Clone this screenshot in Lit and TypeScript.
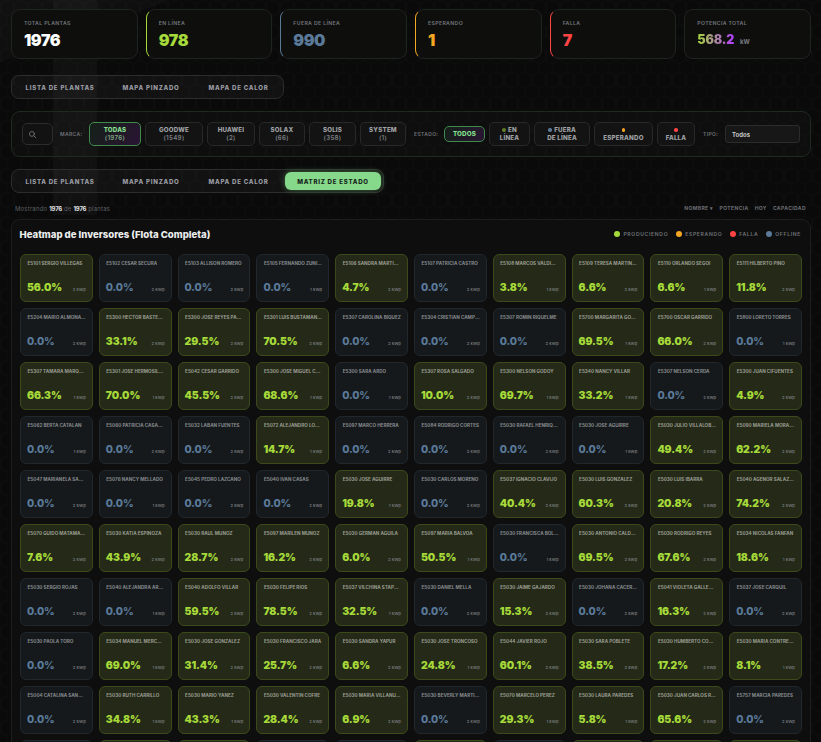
import { LitElement, html, css } from "lit";
import { customElement } from "lit/decorators.js";

const rows = `E5101|SERGIO VILLEGAS|56.0|2;E5102|CESAR SECURA|0|2;E5103|ALLISON ROMERO|0|2;E5105|FERNANDO ZUÑIGA|0|1;E5106|SANDRA MARTINEZ|4.7|2;E5107|PATRICIA CASTRO|0|2;E5108|MARCOS VALDIVIA|3.8|1;E5109|TERESA MARTINEZ|6.6|2;E5110|ORLANDO SEGOI|6.6|1;E5111|HILBERTO PINO|11.8|2
E5204|MARIO ALMONACID|0|2;E5300|HECTOR BASTERRICA|33.1|2;E5300|JOSE REYES PAREDES|29.5|2;E5301|LUIS BUSTAMANTE|70.5|2;E5307|CAROLINA BIQUEZ|0|2;E5304|CRISTIAN CAMPOS|0|2;E5307|ROMIN RIQUELME|0|2;E5700|MARGARITA GODOY|69.5|1;E5700|OSCAR GARRIDO|66.0|2;E5800|LORETO TORRES|0|1
E5307|TAMARA MARQUEZ|66.3|1;E5301|JOSE HERMOSILLA|70.0|1;E5042|CESAR GARRIDO|45.5|2;E5300|JOSE MIGUEL CORTES|68.6|1;E5300|SARA ARDO|0|1;E5307|ROSA SALGADO|10.0|2;E5300|NELSON GODOY|69.7|1;E5340|NANCY VILLAR|33.2|1;E5307|NELSON CERDA|0|2;E5300|JUAN CIFUENTES|4.9|2
E5062|BERTA CATALAN|0|1;E5060|PATRICIA CASANOVA|0|2;E5032|LABAN FUENTES|0|2;E5072|ALEJANDRO LOPEZ|14.7|1;E5097|MARCO HERRERA|0|2;E5084|RODRIGO CORTES|0|2;E5030|RAFAEL HENRIQUEZ|0|2;E5030|JOSE AGUIRRE|0|1;E5030|JULIO VILLALOBOS|49.4|2;E5090|MARIELA MORALES|62.2|2
E5047|MARIANELA SALAS|0|2;E5076|NANCY MELLADO|0|1;E5045|PEDRO LAZCANO|0|2;E5040|IVAN CASAS|0|2;E5030|JOSE AGUIRRE|19.8|1;E5030|CARLOS MORENO|0|2;E5037|IGNACIO CLAVIJO|40.4|2;E5030|LUIS GONZALEZ|60.3|2;E5030|LUIS IBARRA|20.8|2;E5040|AGENOR SALAZAR|74.2|2
E5070|GUIDO MATAMALA|7.6|2;E5030|KATIA ESPINOZA|43.9|2;E5030|RAUL MUÑOZ|28.7|2;E5097|MARILEN MUÑOZ|16.2|2;E5030|GERMAN AGUILA|6.0|2;E5097|MARIA BALVOA|50.5|1;E5030|FRANCISCA BOLAÑOS|0|1;E5030|ANTONIO CALDERON|69.5|2;E5030|RODRIGO REYES|67.6|2;E5034|NICOLAS FANFAN|18.6|1
E5030|SERGIO ROJAS|0|2;E5040|ALEJANDRA ARAYA|0|1;E5040|ADOLFO VILLAR|59.5|2;E5030|FELIPE RIOS|78.5|2;E5037|VILCHINA STAPUNG|32.5|1;E5030|DANIEL MELLA|0|2;E5030|JAIME GAJARDO|15.3|2;E5030|JOHANA CACERES|0|2;E5041|VIOLETA GALLEGOS|16.3|2;E5037|JOSE CARQUIL|0|2
E5030|PAOLA TORO|0|2;E5034|MANUEL MERCADO|69.0|1;E5030|JOSE GONZALEZ|31.4|2;E5030|FRANCISCO JARA|25.7|2;E5030|SANDRA YAPUR|6.6|2;E5030|JOSE TRONCOSO|24.8|1;E5044|JAVIER ROJO|60.1|2;E5030|SARA POBLETE|38.5|2;E5030|HUMBERTO CORTES|17.2|2;E5030|MARIA CONTRERAS|8.1|1
E5004|CATALINA SANCHEZ|0|2;E5030|RUTH CARRILLO|34.8|1;E5030|MARIO YANEZ|43.3|1;E5030|VALENTIN COFRE|28.4|2;E5030|MARIA VILLANUEVA|6.9|2;E5030|BEVERLY MARTINEZ|0|2;E5070|MARCELO PEREZ|29.3|1;E5030|LAURA PAREDES|5.8|1;E5030|JUAN CARLOS ROJAS|65.6|2;E5757|MARCIA PAREDES|0|2
E5020|ANA TORRES|0|2;E5021|LUIS SOTO|12.4|2;E5022|ELENA DIAZ|40.1|1;E5023|PEDRO ROJAS|0|2;E5024|JUAN VEGA|0|2;E5025|RITA LEON|22.0|2;E5026|OMAR PAZ|0|1;E5027|INES LARA|31.2|2;E5028|HUGO MENA|18.3|2;E5029|SARA RUIZ|9.4|2`
  .split("\n")
  .map((r) => r.split(";").map((c) => {
    const [id, name, v, k] = c.split("|");
    return { id, name, v, k };
  }));

const kpis = [
  { l: "TOTAL PLANTAS", v: "1976", c: "" },
  { l: "EN LÍNEA", v: "978", c: "lime" },
  { l: "FUERA DE LÍNEA", v: "990", c: "blue" },
  { l: "ESPERANDO", v: "1", c: "amber" },
  { l: "FALLA", v: "7", c: "red" },
];

const brands = [["TODAS", "(1976)"], ["GOODWE", "(1549)"], ["HUAWEI", "(2)"], ["SOLAX", "(66)"], ["SOLIS", "(358)"], ["SYSTEM", "(1)"]];
const states = [
  { a: "EN", b: "LÍNEA", d: "#5e7a24" },
  { a: "FUERA", b: "DE LÍNEA", d: "#5b7a99" },
  { a: "", b: "ESPERANDO", d: "#f5a623" },
  { a: "", b: "FALLA", d: "#ff4444" },
];
const legend = [["PRODUCIENDO", "#a6d93a"], ["ESPERANDO", "#f5a623"], ["FALLA", "#ff4444"], ["OFFLINE", "#5b7a99"]];

const hex = "url(\"data:image/svg+xml,%3Csvg xmlns='http://www.w3.org/2000/svg' width='14' height='24'%3E%3Cpath d='M7 0L14 4V12L7 16L0 12V4ZM7 16V24M0 12V4M14 12V4' fill='none' stroke='%23ffffff' stroke-opacity='.016' stroke-width='1'/%3E%3C/svg%3E\")";

@customElement("app-root")
export class AppRoot extends LitElement {
  static styles = css`
    :host {
      display: block;
      height: 742px;
      overflow: hidden;
      box-sizing: border-box;
      padding: 9px 10px 0 11px;
      color: #fff;
      font-family: "Inter", "Liberation Sans", sans-serif;
      background-color: #0a0a0a;
      background-repeat: no-repeat, no-repeat, repeat;
      background-size: 100% 215px, 100% 215px, 14px 24px;
    }
    .kpis { display: grid; grid-template-columns: repeat(6, 1fr); gap: 8px; }
    .kpi {
      height: 50px; box-sizing: border-box; padding: 10px 12px;
      background: #0e0f0d; border: 1px solid #1e2420; border-radius: 9px;
    }
    .kpi.lime { border-left-color: #a6d93a; }
    .kpi.blue { border-left-color: #5b7a99; }
    .kpi.amber { border-left-color: #f5a623; }
    .kpi.red { border-left-color: #ff4444; }
    .kpi .l { font-size: 5.2px; line-height: 7px; font-weight: 600; letter-spacing: .35px; color: #73767c; }
    .kpi .v { font-size: 16px; line-height: 20px; margin-top: 3px; font-weight: 900; letter-spacing: -.4px; display: flex; align-items: baseline; gap: 6px; }
    .kpi.lime .v { color: #a6d93a; }
    .kpi.blue .v { color: #5b7a99; }
    .kpi.amber .v { color: #f5a623; }
    .kpi.red .v { color: #ff4444; }
    .grad { font-size: 12.5px; letter-spacing: -.2px; background: linear-gradient(90deg, #a6d93a, #b23cff); -webkit-background-clip: text; background-clip: text; color: transparent; }
    .kw { font-size: 6px; font-weight: 700; letter-spacing: 0; color: #7a7d83; }

    .tabs {
      display: inline-grid; grid-auto-flow: column; grid-auto-columns: auto; gap: 4px; box-sizing: border-box; height: 24px; padding: 2px;
      background: rgba(255,255,255,.035); border: 1px solid #2a2d2a; border-radius: 8px; vertical-align: top;
    }
    .tabrow { margin-top: 16px; height: 24px; }
    .tabrow.second { margin-top: 12px; }
    .tab {
      display: flex; align-items: center; justify-content: center; font-size: 6.1px; font-weight: 800;
      letter-spacing: .74px; color: #9a9ca3; border-radius: 6px; white-space: nowrap;
    }
    .t1 { width: 92px; }
    .t2 { width: 82px; }
    .t3 { width: 85px; }
    .tab.on { width: 96px; background: #86d98a; color: #14241a; box-shadow: 0 0 6px rgba(134,217,138,.45); }

    .filters {
      margin-top: 12px; height: 46px; box-sizing: border-box; padding: 0 10px;
      background: rgba(255,255,255,.018); border: 1px solid #1d2a1f; border-radius: 9px;
      display: grid; align-items: center;
      grid-template-columns: 31px 28px 52px 58px 48px 46px 47px 46px 30px 41px 41px 56px 59px 38px 22px 75px;
      column-gap: 4px;
    }
    .search {
      height: 22px; box-sizing: border-box; border: 1px solid #2a2d2a; border-radius: 5px;
      background: #111211; display: flex; align-items: center; padding-left: 5px;
    }
    .flabel { font-size: 5px; font-weight: 600; letter-spacing: .35px; color: #6f7278; white-space: nowrap; margin-left: 3px; }
    .flabel.wide { margin-left: 4px; }
    .fb {
      height: 24px; box-sizing: border-box; border: 1px solid #262926; border-radius: 5px; background: #121312;
      display: flex; flex-direction: column; align-items: center; justify-content: center;
      font-size: 6.2px; line-height: 8px; font-weight: 800; color: #a0a2a6; letter-spacing: .2px; white-space: nowrap;
    }
    .fb .sub { font-weight: 600; color: #7c7f84; letter-spacing: .3px; }
    .fb.on { border-color: #3f8a4c; color: #86e08e; background: linear-gradient(120deg, #142018, #2a1433); }
    .fb.on .sub { color: #7da582; }
    .fb.short { height: 16px; }
    .dotline { display: flex; align-items: center; gap: 2.5px; min-height: 8px; }
    .dot { width: 3.6px; height: 3.6px; border-radius: 50%; flex: none; }
    .select {
      height: 18px; box-sizing: border-box; border: 1px solid #2b2d2b; border-radius: 3px; background: #161716;
      display: flex; align-items: center; padding-left: 6px; font-size: 6px; font-weight: 700; color: #c6c7c9;
    }

    .meta { display: flex; justify-content: space-between; align-items: center; height: 8px; margin-top: 11px; padding: 0 5px 0 4px; }
    .count { font-size: 5.9px; color: #5d6066; letter-spacing: .25px; }
    .count b { color: #d5d6d8; font-weight: 800; letter-spacing: -.2px; }
    .sort { display: flex; gap: 6px; font-size: 5px; font-weight: 700; letter-spacing: .4px; color: #6b6e74; }

    .panel {
      margin-top: 7px; box-sizing: border-box; padding: 8px 8px 0 8px;
      background: #0d0e0d; border: 1px solid #1b1e1c; border-radius: 9px 9px 0 0; height: 560px; overflow: hidden;
    }
    .phead { display: flex; justify-content: space-between; align-items: center; height: 12px; margin-bottom: 14px; }
    .title { font-size: 9.6px; font-weight: 800; color: #eceded; margin-left: -.5px; }
    .legend { display: flex; gap: 8px; padding-right: 1px; }
    .li { display: flex; align-items: center; gap: 3px; font-size: 5.1px; font-weight: 600; letter-spacing: .65px; color: #6f7278; }
    .li i { width: 6px; height: 6px; border-radius: 50%; display: block; }

    .grid { display: grid; grid-template-columns: repeat(10, 1fr); gap: 6px; }
    .cell {
      height: 48px; box-sizing: border-box; padding: 6px 6px 0 6px; border-radius: 6px;
      border: 1px solid #20272d; background: #15191c; min-width: 0; display: flex; flex-direction: column;
    }
    .cell.on { border-color: #3c4a1b; background: #242a17; }
    .name {
      font-size: 4.6px; line-height: 6px; font-weight: 700; color: #868a8c; white-space: nowrap; overflow: hidden;
      text-overflow: ellipsis; padding-left: .5px; letter-spacing: .02px;
    }
    .on .name { color: #9a9c92; }
    .row { display: flex; justify-content: space-between; align-items: baseline; margin-top: 14px; }
    .val { font-size: 10.4px; line-height: 14px; font-weight: 800; color: #5b7a99; letter-spacing: -.1px; }
    .on .val { color: #a6d93a; font-weight: 900; }
    .kwp { font-size: 4.1px; font-weight: 600; color: #75787a; letter-spacing: .1px; }
  `;

  connectedCallback() {
    super.connectedCallback();
    this.style.backgroundImage = [
      "linear-gradient(90deg, transparent 53px, rgba(255,255,255,.028) 53px, rgba(255,255,255,.028) 97px, transparent 97px)",
      "linear-gradient(160deg, rgba(255,255,255,.03) 0, rgba(255,255,255,.02) 12%, transparent 12.2%)",
      hex,
    ].join(",");
  }

  private tabs(all: boolean) {
    return html`<div class="tabs">
      <div class="tab t1">LISTA DE PLANTAS</div>
      <div class="tab t2">MAPA PINZADO</div>
      <div class="tab t3">MAPA DE CALOR</div>
      ${all ? html`<div class="tab on">MATRIZ DE ESTADO</div>` : ""}
    </div>`;
  }

  render() {
    return html`
      <div class="kpis">
        ${kpis.map((k) => html`<div class="kpi ${k.c}"><div class="l">${k.l}</div><div class="v">${k.v}</div></div>`)}
        <div class="kpi"><div class="l">POTENCIA TOTAL</div><div class="v"><span class="grad">568.2</span><span class="kw">kW</span></div></div>
      </div>
      <div class="tabrow">${this.tabs(false)}</div>
      <div class="filters">
        <div class="search">
          <svg width="9" height="9" viewBox="0 0 24 24" fill="none" stroke="#6f7278" stroke-width="2.4" stroke-linecap="round"><circle cx="10.5" cy="10.5" r="6.5"/><path d="M15.5 15.5L21 21"/></svg>
        </div>
        <div class="flabel">MARCA:</div>
        ${brands.map((b, i) => html`<div class="fb ${i === 0 ? "on" : ""}"><div>${b[0]}</div><div class="sub">${b[1]}</div></div>`)}
        <div class="flabel wide">ESTADO:</div>
        <div class="fb on short">TODOS</div>
        ${states.map((s) => html`<div class="fb">
          <div class="dotline"><span class="dot" style="background:${s.d}"></span>${s.a}</div><div>${s.b}</div>
        </div>`)}
        <div class="flabel wide">TIPO:</div>
        <div class="select">Todos</div>
      </div>
      <div class="tabrow second">${this.tabs(true)}</div>
      <div class="meta">
        <div class="count">Mostrando <b>1976</b> de <b>1976</b> plantas</div>
        <div class="sort"><span>NOMBRE ▾</span><span>POTENCIA</span><span>HOY</span><span>CAPACIDAD</span></div>
      </div>
      <div class="panel">
        <div class="phead">
          <div class="title">Heatmap de Inversores (Flota Completa)</div>
          <div class="legend">${legend.map((l) => html`<div class="li"><i style="background:${l[1]}"></i>${l[0]}</div>`)}</div>
        </div>
        <div class="grid">
          ${rows.flat().map((c) => html`<div class="cell ${c.v !== "0" ? "on" : ""}">
            <div class="name">${c.id} ${c.name}</div>
            <div class="row"><span class="val">${c.v === "0" ? "0.0" : c.v}%</span><span class="kwp">${c.k} kWp</span></div>
          </div>`)}
        </div>
      </div>
    `;
  }
}
